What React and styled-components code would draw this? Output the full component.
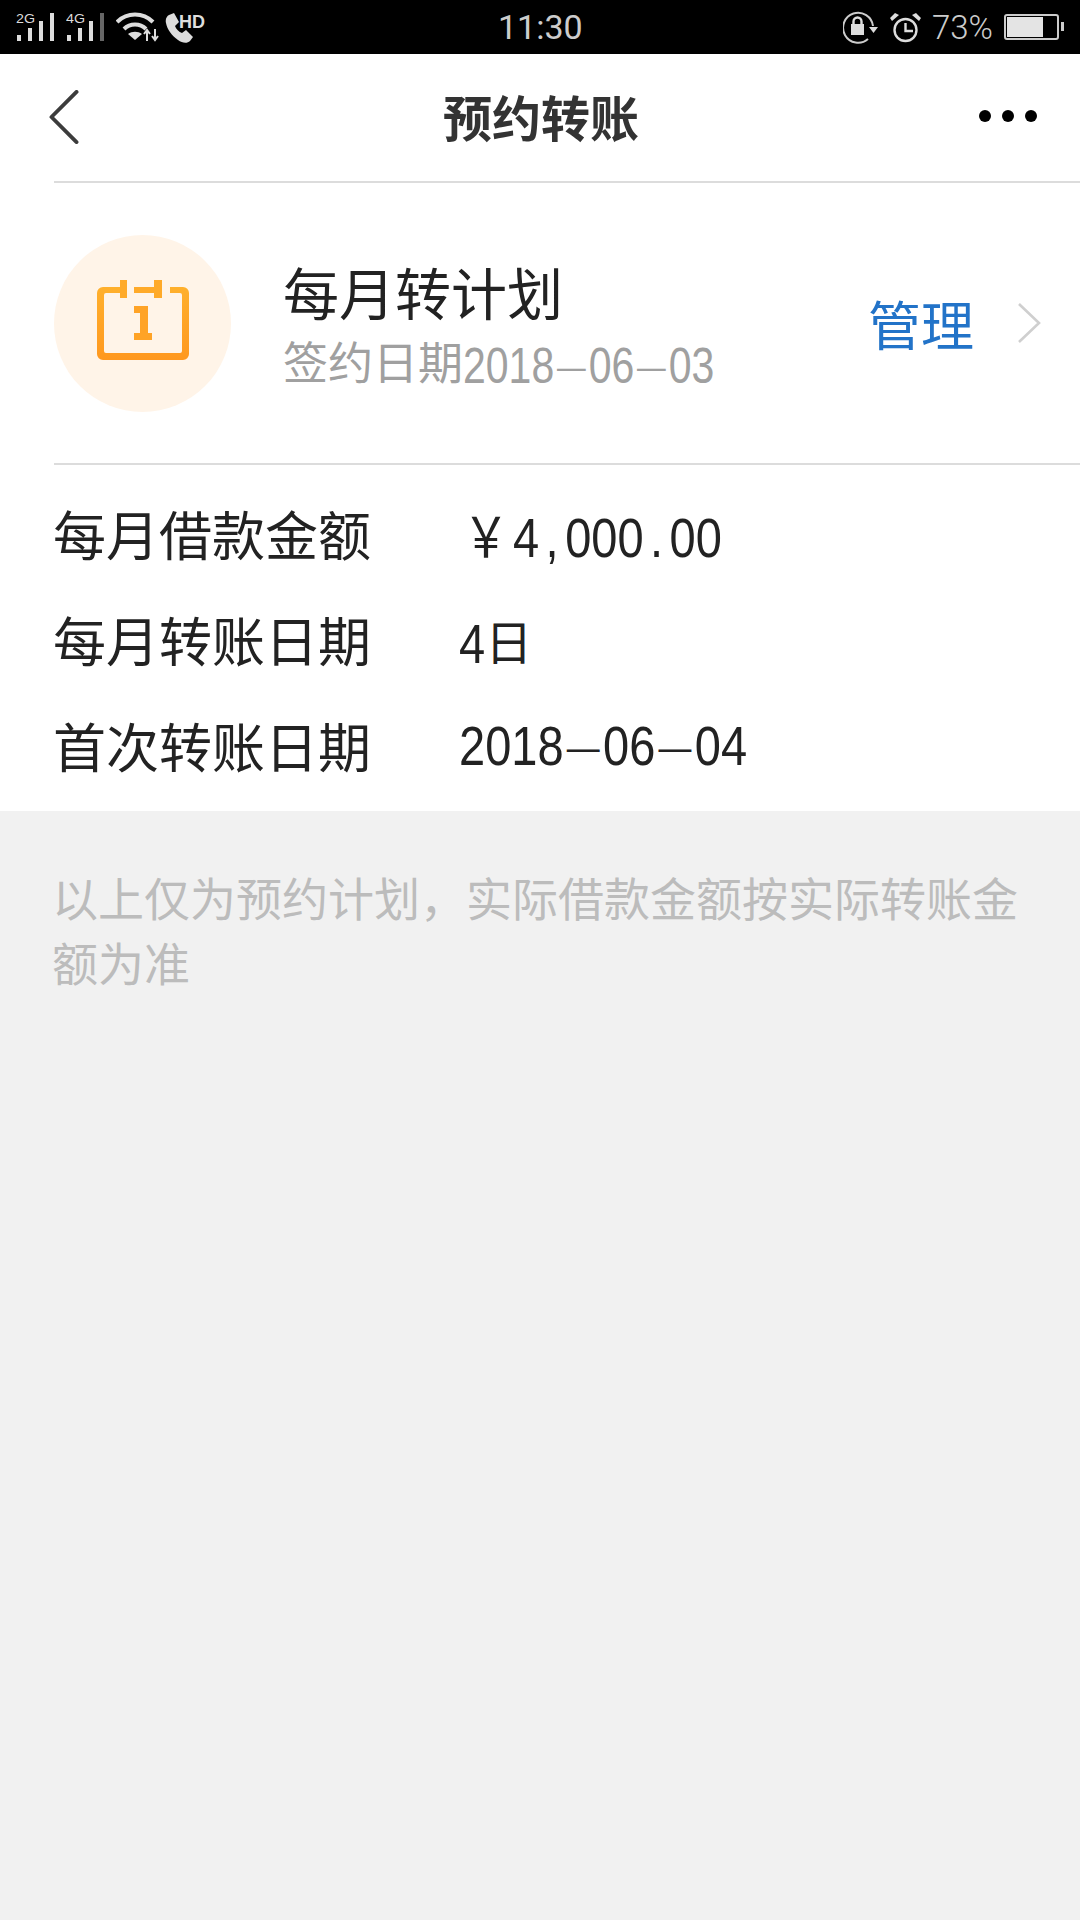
import React from 'react'
import styled, { createGlobalStyle } from 'styled-components'

const GlobalStyle = createGlobalStyle`
  * { box-sizing: border-box; }
  html, body { margin: 0; padding: 0; background: #f1f1f1; }
  body { font-family: "Noto Sans CJK SC", "Noto Sans", sans-serif; }
`

function App() {
  return (
    <Page>
      <GlobalStyle />
      <StatusBar>
        <StatusGroup>
          <Signal label="2G" />
          <Signal label="4G" dim />
          <WifiIcon />
          <PhoneIcon />
        </StatusGroup>
        <Clock>11:30</Clock>
        <RightGroup>
          <LockIcon />
          <AlarmIcon />
          <Percent>73%</Percent>
          <Battery><BatteryFill $level={73} /></Battery>
        </RightGroup>
      </StatusBar>

      <Header>
        <BackIcon />
        <Title>预约转账</Title>
        <Dots><i /><i /><i /></Dots>
      </Header>

      <Section>
        <PlanRow>
          <IconCircle><CalendarIcon /></IconCircle>
          <PlanText>
            <PlanName>每月转计划</PlanName>
            <PlanDate>签约日期<Num>2018<Dash>—</Dash>06<Dash>—</Dash>03</Num></PlanDate>
          </PlanText>
          <Manage>管理</Manage>
          <ChevronIcon />
        </PlanRow>
        <Details>
          <DetailRow>
            <DetailLabel>每月借款金额</DetailLabel>
            <DetailValue><Digits><Yen>￥</Yen>4<Punct>,</Punct>000<Punct>.</Punct>00</Digits></DetailValue>
          </DetailRow>
          <DetailRow>
            <DetailLabel>每月转账日期</DetailLabel>
            <DetailValue><Digits>4</Digits>日</DetailValue>
          </DetailRow>
          <DetailRow>
            <DetailLabel>首次转账日期</DetailLabel>
            <DetailValue><Digits>2018<Dash>—</Dash>06<Dash>—</Dash>04</Digits></DetailValue>
          </DetailRow>
        </Details>
      </Section>

      <Note>以上仅为预约计划，实际借款金额按实际转账金额为准</Note>
    </Page>
  )
}

export default App

function Signal({ label, dim }) {
  return (
    <svg width="40" height="32" viewBox="0 0 40 32">
      <text x="0" y="12" fontSize="12" fontFamily="Liberation Sans" fill="#ddd" textLength="19" lengthAdjust="spacingAndGlyphs">{label}</text>
      <rect x="1" y="24" width="4" height="6" fill="#ddd" />
      <rect x="12" y="17" width="4" height="13" fill="#ddd" />
      <rect x="23" y="10" width="4" height="20" fill="#ddd" />
      <rect x="34" y="2" width="4" height="28" fill={dim ? '#666' : '#ddd'} />
    </svg>
  )
}

function WifiIcon() {
  return (
    <svg width="44" height="32" viewBox="0 0 44 32" fill="none" stroke="#ddd" strokeWidth="4">
      <path d="M1 11C11 1 27 1 37 11" />
      <path d="M8 18C14 12 24 12 30 18" />
      <path d="M19 29L12 23C16 20 22 20 26 23Z" fill="#ddd" stroke="none" />
      <path d="M31 30V19M28 23l3-4 3 4M39 18v11M36 25l3 4 3-4" strokeWidth="2" />
    </svg>
  )
}

function PhoneIcon() {
  return (
    <PhoneSvg width="40" height="32" viewBox="0 0 40 32">
      <path
        d="M4 4L9 2L14 11L10 15C11 18 14 21 17 22L21 19L28 26L25 30C22 33 17 32 13 29C7 25 2 18 1 12C0 8 2 5 4 4Z"
        fill="#ddd"
      />
      <text x="14" y="17" fontSize="18" fontWeight="700" fontFamily="Liberation Sans" fill="#ddd">HD</text>
    </PhoneSvg>
  )
}

function LockIcon() {
  return (
    <svg width="36" height="33" viewBox="0 0 36 33" fill="none" stroke="#ccc" strokeWidth="2">
      <path d="M25 28A15 15 0 1 1 30 15" />
      <path d="M26 16H35L30.5 22Z" fill="#ddd" stroke="none" />
      <rect x="8" y="13" width="13" height="11" fill="#ddd" stroke="none" />
      <path d="M10.5 13V10.5A4 4 0 0 1 18.5 10.5V13" strokeWidth="2.4" stroke="#ddd" />
    </svg>
  )
}

function AlarmIcon() {
  return (
    <svg width="31" height="32" viewBox="0 0 31 32" fill="none" stroke="#ddd" strokeWidth="2.4">
      <circle cx="15.5" cy="19" r="11" />
      <path d="M15.5 12V20H23" />
      <path d="M0 7L5 2L9 4L2 10Z M31 7L26 2L22 4L29 10Z" fill="#ddd" stroke="none" />
    </svg>
  )
}

function BackIcon() {
  return (
    <BackSvg viewBox="0 0 32 56" fill="none" stroke="#3c3c3c" strokeWidth="4" strokeLinecap="round" strokeLinejoin="round">
      <path d="M29 2L3 28L29 54" />
    </BackSvg>
  )
}

function ChevronIcon() {
  return (
    <ChevronSvg viewBox="0 0 26 42" fill="none" stroke="#cfcfcf" strokeWidth="2.6">
      <path d="M3 2L23 21L3 40" />
    </ChevronSvg>
  )
}

function CalendarIcon() {
  return (
    <CalendarSvg width="92" height="80" viewBox="0 0 92 80">
      <defs>
        <linearGradient id="cal" x1="0" y1="0" x2="0" y2="1">
          <stop offset="0" stopColor="#ffb02c" />
          <stop offset="1" stopColor="#ff981f" />
        </linearGradient>
      </defs>
      <path
        fill="url(#cal)"
        d="M23 7H6A6 6 0 0 0 0 13V74A6 6 0 0 0 6 80H86A6 6 0 0 0 92 74V13A6 6 0 0 0 86 7H73V13H83A2 2 0 0 1 85 15V71A2 2 0 0 1 83 73H9A2 2 0 0 1 7 71V15A2 2 0 0 1 9 13H23Z"
      />
      <path fill="#ffaa29" d="M23 0H30V18H23Z M57 0H65V18H57Z M37 7H57V13H37Z" />
      <path fill="#ffa326" d="M37 26H51V53H55V60H37V53H43V33H37Z" />
    </CalendarSvg>
  )
}

const Page = styled.div`
  width: 1080px;
  min-height: 1920px;
  background: #f1f1f1;
  overflow: hidden;
`

const StatusBar = styled.div`
  height: 54px;
  background: #000;
  display: flex;
  align-items: center;
  justify-content: space-between;
  padding: 0 21px 0 16px;
  position: relative;
`

const StatusGroup = styled.div`
  display: flex;
  align-items: center;
  gap: 10px;
`

const RightGroup = styled(StatusGroup)`
  gap: 11px;
`

const PhoneSvg = styled.svg`
  margin-left: -5px;
`

const Clock = styled.span`
  position: absolute;
  left: 498px;
  font-family: "Roboto", sans-serif;
  font-size: 34px;
  color: #ccc;
`

const Percent = styled.span`
  font-family: "Roboto", sans-serif;
  font-weight: 300;
  font-size: 33px;
  color: #ccc;
`

const Battery = styled.div`
  width: 55px;
  height: 26px;
  border: 2px solid #ccc;
  border-radius: 3px;
  padding: 1px;
  position: relative;

  &::after {
    content: '';
    position: absolute;
    right: -7px;
    top: 6px;
    width: 3px;
    height: 9px;
    background: #ccc;
  }
`

const BatteryFill = styled.div`
  height: 100%;
  width: ${p => p.$level}%;
  background: #e4e4e4;
`

const Header = styled.div`
  height: 127px;
  background: #fff;
  display: flex;
  align-items: center;
  justify-content: space-between;
  padding: 0 43px 5px 48px;
  position: relative;
`

const BackSvg = styled.svg`
  width: 32px;
  height: 54px;
  margin-top: 4px;
`

const Title = styled.h1`
  position: absolute;
  left: 0;
  right: 0;
  margin: 0;
  padding-left: 2px;
  text-align: center;
  font-size: 49px;
  font-weight: 700;
  color: #333;
`

const Dots = styled.div`
  display: flex;
  gap: 11px;
  margin-top: 2px;

  i {
    width: 12px;
    height: 12px;
    border-radius: 50%;
    background: #000;
  }
`

const Section = styled.div`
  background: #fff;
  padding-left: 54px;
`

const PlanRow = styled.div`
  height: 284px;
  border-top: 2px solid #dcdcdc;
  border-bottom: 2px solid #dcdcdc;
  display: flex;
  align-items: center;
`

const IconCircle = styled.div`
  width: 177px;
  height: 177px;
  border-radius: 50%;
  background: #fff4e8;
  display: flex;
  align-items: center;
  justify-content: center;
  flex-shrink: 0;
`

const CalendarSvg = styled.svg`
  margin-top: -7px;
`

const PlanText = styled.div`
  margin-left: 52px;
  padding-top: 10px;
  flex: 1;
  display: flex;
  flex-direction: column;
`

const PlanName = styled.div`
  font-size: 56px;
  line-height: 72px;
  color: #222;
`

const PlanDate = styled.div`
  font-size: 45px;
  line-height: 68px;
  color: #a0a0a0;
`

// the digits in the reference are narrow and tall, so they get stretched a little
const Digits = styled.span`
  display: inline-block;
  white-space: nowrap;
  font-family: "Liberation Sans", sans-serif;
  transform: scaleY(1.2);
`

const Num = styled(Digits)`
  font-size: 41px;
`

const Dash = styled.span`
  font-size: 0.7em;
  margin: 0 0.1em;
  vertical-align: 0.12em;
`

const Manage = styled.span`
  font-size: 53px;
  color: #2273c8;
`

const ChevronSvg = styled.svg`
  width: 26px;
  height: 42px;
  margin: 0 38px 0 42px;
`

const Details = styled.div`
  padding: 15px 0 13px;
`

const DetailRow = styled.div`
  height: 106px;
  display: flex;
  align-items: center;
`

const DetailLabel = styled.span`
  width: 405px;
  margin-left: -1px;
  margin-right: 1px;
  font-size: 53px;
  color: #222;
`

const DetailValue = styled.span`
  font-family: "Liberation Sans", "Noto Sans CJK SC", sans-serif;
  font-size: 47px;
  color: #222;
`

const Yen = styled.span`
  display: inline-block;
  width: 54px;
  padding-left: 4px;
  font-family: "Noto Sans CJK SC", sans-serif;
  font-size: 46px;
`

const Punct = styled.span`
  display: inline-block;
  width: 26px;
  text-align: center;
`

const Note = styled.p`
  margin: 0;
  padding: 53px 54px 0 52px;
  font-size: 46px;
  line-height: 65px;
  color: #bcbcbc;
`
